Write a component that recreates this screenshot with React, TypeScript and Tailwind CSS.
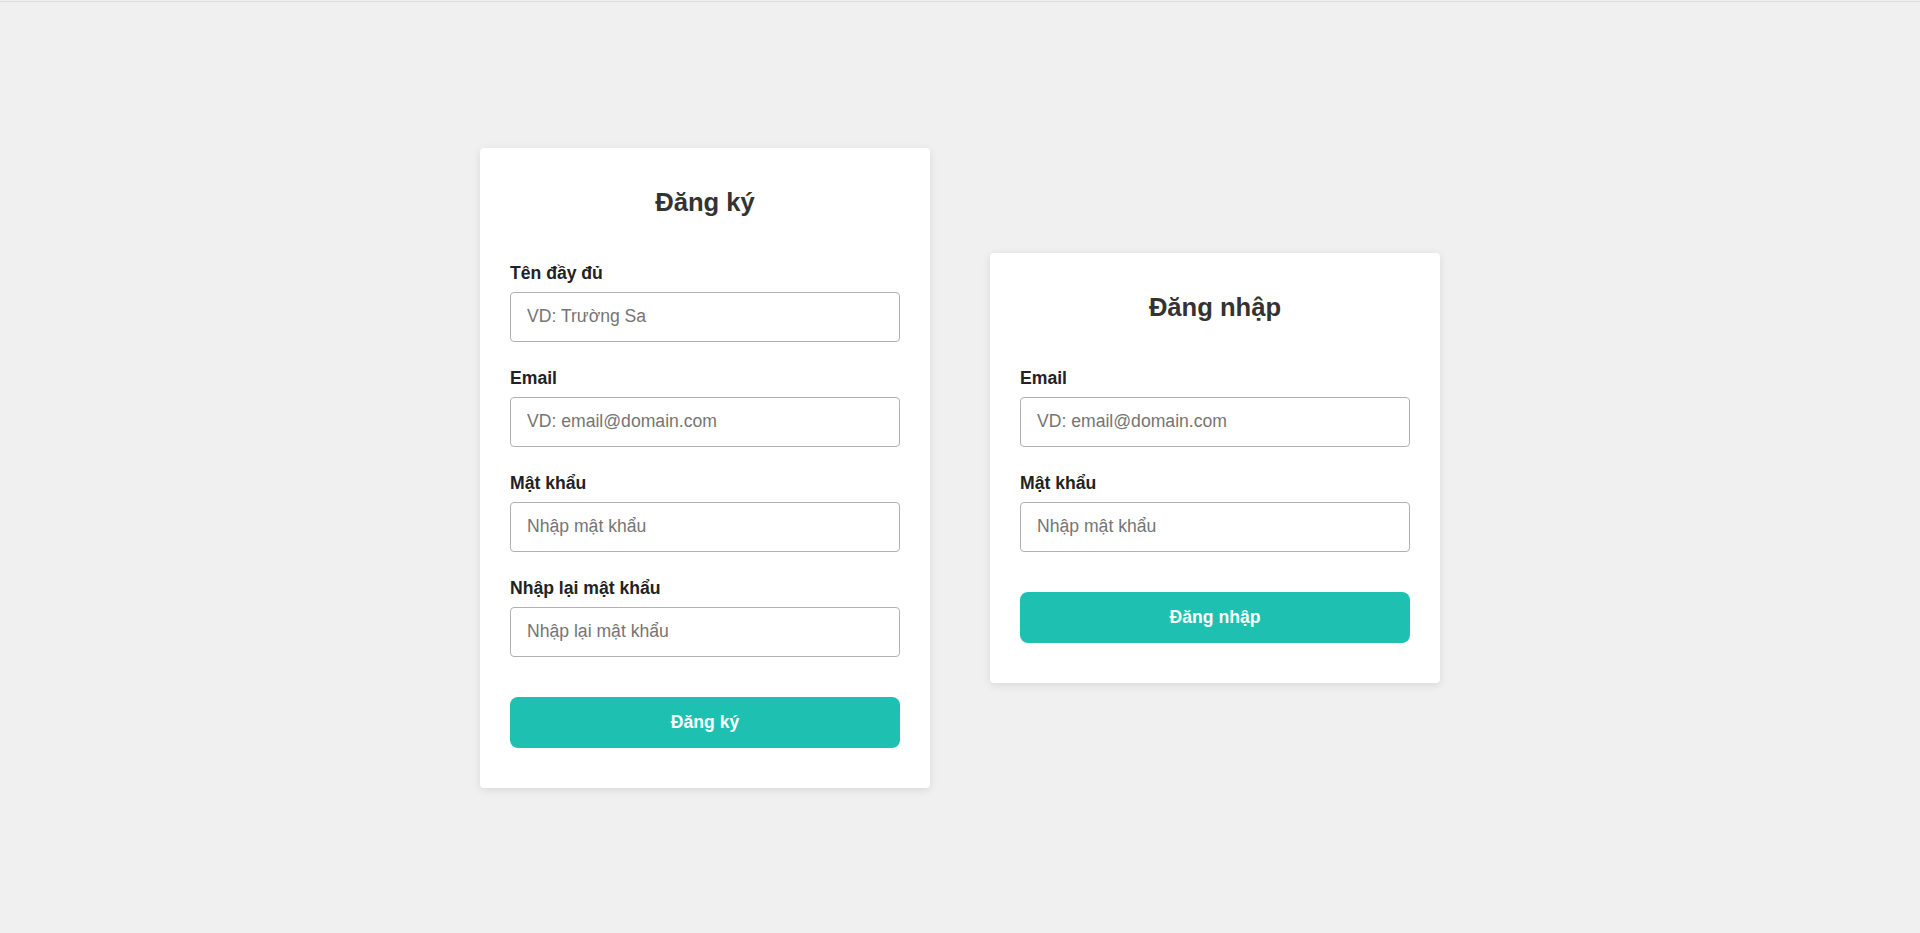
import React, { useState } from "react";

interface Field {
  name: string;
  label: string;
  type: string;
  placeholder: string;
}

const registerFields: Field[] = [
  { name: "fullname", label: "Tên đầy đủ", type: "text", placeholder: "VD: Trường Sa" },
  { name: "email", label: "Email", type: "text", placeholder: "VD: email@domain.com" },
  { name: "password", label: "Mật khẩu", type: "password", placeholder: "Nhập mật khẩu" },
  { name: "password_confirmation", label: "Nhập lại mật khẩu", type: "password", placeholder: "Nhập lại mật khẩu" },
];

const loginFields: Field[] = [
  { name: "email", label: "Email", type: "text", placeholder: "VD: email@domain.com" },
  { name: "password", label: "Mật khẩu", type: "password", placeholder: "Nhập mật khẩu" },
];

function AuthForm({ title, fields }: { title: string; fields: Field[] }) {
  const [values, setValues] = useState<Record<string, string>>({});

  return (
    <form
      className="w-[450px] bg-white rounded-[4px] shadow-[0_2px_8px_rgba(0,0,0,0.1)] px-[30px] pt-[39px] pb-[40px]"
      onSubmit={(e) => e.preventDefault()}
    >
      <h3 className="text-center text-[25.6px] leading-[30px] font-bold text-[#333] mb-[46px]">
        {title}
      </h3>
      <div className="flex flex-col gap-[26px]">
        {fields.map((f) => (
          <div key={f.name}>
            <label className="block text-[17.6px] leading-[20px] font-bold text-[#222] mb-[9px]">
              {f.label}
            </label>
            <input
              type={f.type}
              name={f.name}
              placeholder={f.placeholder}
              value={values[f.name] || ""}
              onChange={(e) => setValues({ ...values, [f.name]: e.target.value })}
              className="block w-full h-[50px] border border-[#b1b1b1] rounded-[4px] px-4 text-[17.6px] text-[#333] placeholder:text-[#757575] outline-none"
            />
          </div>
        ))}
      </div>
      <button
        type="submit"
        className="block w-full h-[51px] mt-[40px] rounded-[8px] bg-[#1ec1b1] text-white text-[17.6px] font-bold cursor-pointer"
      >
        {title}
      </button>
    </form>
  );
}

export default function App() {
  return (
    <div
      className="min-h-screen flex flex-col bg-[#f0f0f0]"
      style={{ fontFamily: '"Liberation Sans", Arial, sans-serif' }}
    >
      <div className="h-[2px] border-b border-[#dcdcdc]" />
      <div className="flex-1 flex items-center justify-center gap-[60px]">
        <AuthForm title="Đăng ký" fields={registerFields} />
        <AuthForm title="Đăng nhập" fields={loginFields} />
      </div>
    </div>
  );
}
